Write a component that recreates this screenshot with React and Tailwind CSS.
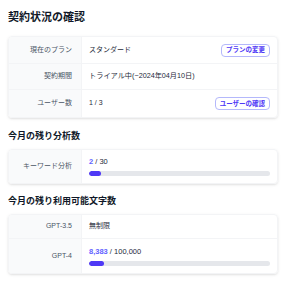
const font = { fontFamily: '"Liberation Sans", "Noto Sans CJK JP", sans-serif' };

function Row({ label, children, last, h = 'h-[27px]' }) {
  return (
    <div className={`flex ${h} ${last ? '' : 'border-b border-gray-100'}`}>
      <div className="w-[73px] shrink-0 bg-gray-50 border-r border-gray-100 flex items-center justify-end pr-[9px] text-[7px] text-gray-600">
        {label}
      </div>
      <div className="flex-1 flex items-center justify-between pl-[7px] pr-[7px] text-[7px] text-gray-800">
        {children}
      </div>
    </div>
  );
}

function SmallButton({ children }) {
  return (
    <span className="inline-flex items-center h-[13px] px-[4px] rounded-[4px] border border-[#b4b8fb] text-indigo-600 font-bold text-[6.5px] bg-white">
      {children}
    </span>
  );
}

function Usage({ used, total, pct }) {
  return (
    <div className="flex-1 flex flex-col justify-center">
      <div className="text-[7.5px] text-gray-800 leading-[10px]">
        <span className="font-bold text-indigo-500">{used}</span> / {total}
      </div>
      <div className="mt-[4px] h-[5px] w-full rounded-full bg-gray-200 overflow-hidden">
        <div className="h-full rounded-full bg-indigo-600" style={{ width: pct + '%' }} />
      </div>
    </div>
  );
}

export default function App() {
  return (
    <div className="w-[300px] h-[284px] bg-white pl-[8px] pr-[22px] pt-[10px]" style={font}>
      <h1 className="text-[11px] font-bold text-gray-900 leading-[14px] mb-[12px]">契約状況の確認</h1>

      <div className="rounded-[4px] border border-gray-100 shadow-sm overflow-hidden">
        <Row label="現在のプラン">
          <span>スタンダード</span>
          <SmallButton>プランの変更</SmallButton>
        </Row>
        <Row label="契約期間" h="h-[26px]">
          <span className="text-[7.2px]">トライアル中(~2024年04月10日)</span>
        </Row>
        <Row label="ユーザー数" last>
          <span>1 / 3</span>
          <SmallButton>ユーザーの確認</SmallButton>
        </Row>
      </div>

      <h2 className="mt-[12px] mb-[7px] text-[9px] font-bold text-gray-900 leading-[12px]">今月の残り分析数</h2>

      <div className="rounded-[4px] border border-gray-100 shadow-sm overflow-hidden">
        <Row label="キーワード分析" last h="h-[33px]">
          <Usage used="2" total="30" pct={6.7} />
        </Row>
      </div>

      <h2 className="mt-[11px] mb-[7px] text-[9px] font-bold text-gray-900 leading-[12px]">今月の残り利用可能文字数</h2>

      <div className="rounded-[4px] border border-gray-100 shadow-sm overflow-hidden">
        <Row label="GPT-3.5" h="h-[24px]">
          <span>無制限</span>
        </Row>
        <Row label="GPT-4" last h="h-[34px]">
          <Usage used="8,383" total="100,000" pct={8.4} />
        </Row>
      </div>
    </div>
  );
}
